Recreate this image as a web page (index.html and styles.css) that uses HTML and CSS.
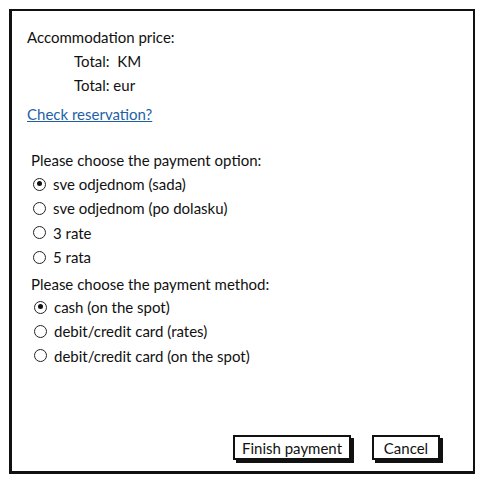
FILE: index.html
```html
<!DOCTYPE html>
<html>
<head>
<meta charset="utf-8">
<link rel="stylesheet" href="styles.css">
</head>
<body>
<div class="frame">
  <div class="price">
    <div class="row">Accommodation price:</div>
    <div class="row indent">Total:&nbsp; KM</div>
    <div class="row indent">Total: eur</div>
  </div>
  <a class="link" href="#">Check reservation?</a>
  <div class="group first">
    <div class="heading">Please choose the payment option:</div>
    <label class="radio"><span class="dot on"></span>sve odjednom (sada)</label>
    <label class="radio"><span class="dot"></span>sve odjednom (po dolasku)</label>
    <label class="radio"><span class="dot"></span>3 rate</label>
    <label class="radio"><span class="dot"></span>5 rata</label>
  </div>
  <div class="group second">
    <div class="heading">Please choose the payment method:</div>
    <label class="radio"><span class="dot on"></span>cash (on the spot)</label>
    <label class="radio"><span class="dot"></span>debit/credit card (rates)</label>
    <label class="radio"><span class="dot"></span>debit/credit card (on the spot)</label>
  </div>
  <div class="actions">
    <button class="btn finish">Finish payment</button>
    <button class="btn cancel">Cancel</button>
  </div>
</div>
</body>
</html>
```
FILE: styles.css
```css
html, body {
  margin: 0;
  padding: 0;
  background: #fff;
}
body {
  font-family: "Lato", "Noto Sans", sans-serif;
  font-size: 15px;
  color: #111;
}
.frame {
  margin: 9px;
  width: 466px;
  height: 465px;
  box-sizing: border-box;
  border: 2px solid #111;
  border-left-width: 3px;
  border-bottom-width: 3px;
  display: flex;
  flex-direction: column;
  padding: 14px 33px 11px 0;
}
.price {
  padding-left: 15px;
}
.row {
  line-height: 24px;
}
.indent {
  padding-left: 47px;
}
.link {
  display: block;
  align-self: flex-start;
  margin: 5px 0 0 15px;
  line-height: 24px;
  color: #1f5fa6;
  text-decoration: underline;
}
.group {
  padding-left: 19px;
}
.group.first {
  margin-top: 22px;
}
.group.second {
  margin-top: 4px;
}
.heading {
  line-height: 24px;
}
.second .heading {
  line-height: 22px;
}
.radio {
  display: flex;
  align-items: center;
  line-height: 24.3px;
  padding-left: 2px;
}
.second .radio {
  padding-left: 3px;
}
.dot {
  width: 13px;
  height: 13px;
  box-sizing: border-box;
  border: 1.5px solid #222;
  border-radius: 50%;
  margin-right: 7px;
  position: relative;
  flex: none;
}
.dot.on::after {
  content: "";
  position: absolute;
  left: 2.5px;
  top: 2.5px;
  width: 5px;
  height: 5px;
  border-radius: 50%;
  background: #111;
}
.actions {
  margin-top: auto;
  display: flex;
  justify-content: flex-end;
  gap: 21px;
}
.btn {
  font-family: inherit;
  font-size: 15px;
  color: #111;
  background: #fff;
  border: 2px solid #111;
  box-shadow: 3px 3px 0 #111;
  height: 25px;
  padding: 0 6px;
  border-radius: 0;
}
.finish {
  width: 118px;
}
.cancel {
  width: 68px;
}
```
